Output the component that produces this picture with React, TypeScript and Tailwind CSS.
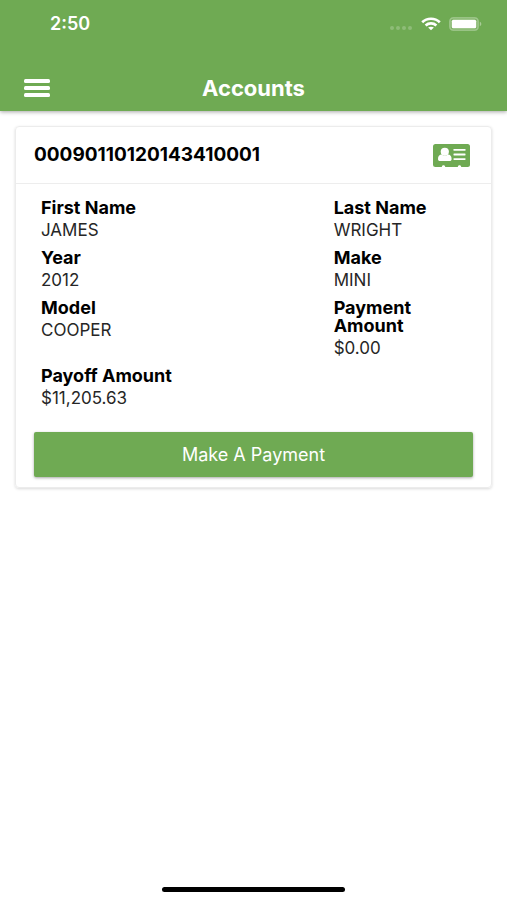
type Field = { label: string; value: string };

const fields: Field[] = [
  { label: "First Name", value: "JAMES" },
  { label: "Last Name", value: "WRIGHT" },
  { label: "Year", value: "2012" },
  { label: "Make", value: "MINI" },
  { label: "Model", value: "COOPER" },
  { label: "Payment Amount", value: "$0.00" },
  { label: "Payoff Amount", value: "$11,205.63" },
];

function StatusBar() {
  return (
    <div className="flex h-12 items-center justify-between pr-[25px] pl-[50px] text-white">
      <span className="text-lg font-semibold">2:50</span>
      <div className="flex items-center gap-2">
        <svg width="24" height="16" viewBox="0 0 24 16" aria-hidden="true" fill="#fff" fillOpacity="0.22">
          <circle cx="3" cy="12" r="2" />
          <circle cx="9" cy="12" r="2" />
          <circle cx="15" cy="12" r="2" />
          <circle cx="21" cy="12" r="2" />
        </svg>
        <svg width="20" height="14" viewBox="0 0 20 14" aria-label="Wi-Fi" role="img" fill="none" stroke="#fff" strokeWidth="2.6">
          <path d="M1.2 5.2C6 .5 14 .5 18.8 5.2" />
          <path d="M4.6 8.5C7.6 5.7 12.4 5.7 15.4 8.5" />
          <path d="M10 13.2 7.1 10.6C8.7 9.3 11.3 9.3 12.9 10.6Z" fill="#fff" stroke="none" />
        </svg>
        <svg width="33" height="14" viewBox="0 0 33 14" aria-label="Battery" role="img">
          <rect x="0.8" y="0.8" width="28.4" height="12.4" rx="3.5" fill="#fff" fillOpacity="0.12" stroke="#fff" strokeOpacity="0.28" strokeWidth="1.6" />
          <rect x="2.8" y="2.8" width="24.4" height="8.4" rx="1.5" fill="#fff" />
          <path d="M30.8 4.8C32.8 5.5 32.8 8.5 30.8 9.2Z" fill="#fff" fillOpacity="0.4" />
        </svg>
      </div>
    </div>
  );
}

function IdCardIcon() {
  return (
    <svg width="37" height="23" viewBox="0 0 37 23" aria-hidden="true">
      <rect width="37" height="23" rx="2.5" fill="#6faa53" />
      <g fill="#fff">
        <ellipse cx="11.8" cy="7.8" rx="4.1" ry="4" />
        <path d="M5 15C5 11.8 6.6 10.3 8.7 10.4C10.6 12 13 12 14.9 10.4C17 10.3 18.6 11.8 18.6 15C18.6 16.4 17.8 17 16.6 17H7C5.8 17 5 16.4 5 15Z" />
        <rect x="20.5" y="5" width="12" height="1.8" rx="0.4" />
        <rect x="20.5" y="9.6" width="12" height="1.8" rx="0.4" />
        <rect x="20.5" y="14.2" width="12" height="1.8" rx="0.4" />
        <path d="M8.8 23C8.8 20.8 12.2 20.8 12.2 23Z" />
        <path d="M24.8 23C24.8 20.8 28.2 20.8 28.2 23Z" />
      </g>
    </svg>
  );
}

export default function App() {
  return (
    <div className="flex min-h-screen flex-col bg-white font-['Inter','Liberation_Sans',sans-serif] text-black">
      <header className="bg-[#6faa53] shadow-[0_1px_4px_rgba(0,0,0,0.35)]">
        <StatusBar />
        <div className="grid h-[63px] grid-cols-[1fr_auto_1fr] items-center px-6 pt-4">
          <button type="button" aria-label="Open menu" className="w-[26px]">
            <svg width="26" height="18" viewBox="0 0 26 18" aria-hidden="true" fill="#fff">
              <rect y="0" width="26" height="4" rx="1.5" />
              <rect y="7" width="26" height="4" rx="1.5" />
              <rect y="14" width="26" height="4" rx="1.5" />
            </svg>
          </button>
          <h1 className="text-[22px] leading-7 font-bold text-white">Accounts</h1>
        </div>
      </header>

      <main className="flex-1 px-[15px] pt-[15px]">
        <section className="rounded-sm border border-[#ececec] shadow-[0_1px_3px_rgba(0,0,0,0.15)]">
          <div className="flex h-[57px] items-center justify-between border-b border-[#ededed] pr-[21px] pl-[18px]">
            <h2 className="text-[19px] font-bold">00090110120143410001</h2>
            <button type="button" aria-label="Account details">
              <IdCardIcon />
            </button>
          </div>
          <div className="px-[18px] pt-[15px] pb-[10px]">
            <dl className="grid grid-cols-[2fr_1fr] gap-y-[10px]">
              {fields.map((field) => (
                <div key={field.label} className="px-[7px]">
                  <dt className="text-lg leading-[18px] font-bold">{field.label}</dt>
                  <dd className="mt-1 text-[17px] leading-[18px] text-[#262626]">{field.value}</dd>
                </div>
              ))}
            </dl>
            <button
              type="button"
              className="mt-[25px] h-[45px] w-full rounded-xs bg-[#6faa53] text-lg text-white shadow-[0_1px_3px_rgba(0,0,0,0.35)]"
            >
              Make A Payment
            </button>
          </div>
        </section>
      </main>

      <footer className="flex justify-center pb-2">
        <div className="h-[5px] w-[36%] rounded-full bg-black" />
      </footer>
    </div>
  );
}
